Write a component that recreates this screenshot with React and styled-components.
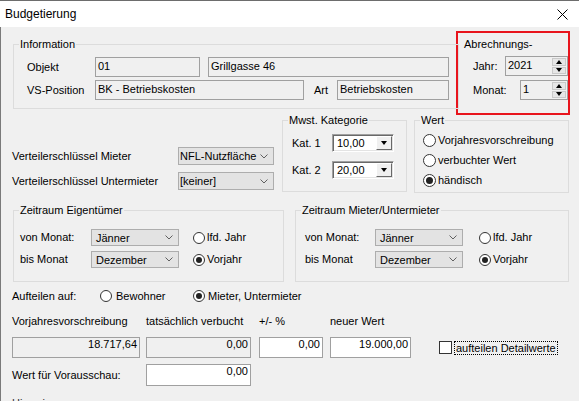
import React from 'react';
import styled, { createGlobalStyle } from 'styled-components';

const GlobalStyle = createGlobalStyle`
  html, body { margin: 0; padding: 0; }
  body { width: 579px; height: 401px; overflow: hidden; background: #f0f0f0; }
  * { box-sizing: border-box; }
`;

const Window = styled.div`
  width: 579px;
  height: 401px;
  display: flex;
  flex-direction: column;
  overflow: hidden;
  border-top: 1px solid #6d6d6d;
  font-family: "Liberation Sans", Arial, sans-serif;
  font-size: 11px;
  color: #000;
  background: #f0f0f0;
`;

const TitleBar = styled.header`
  flex: none;
  height: 26px;
  background: #fff;
  display: flex;
  align-items: center;
  justify-content: space-between;
  padding: 0 11px 0 5px;
  font-size: 12px;
`;

const Body = styled.main`
  flex: 1;
  border-left: 1px solid #7a7a7a;
  padding: 4px 0 0 11px;
  display: flex;
  flex-direction: column;
`;

const Row = styled.div`
  display: flex;
  align-items: ${p => p.$align || 'flex-start'};
  margin-top: ${p => p.$mt || 0}px;
  height: ${p => (p.$h ? p.$h + 'px' : 'auto')};
`;

const GroupBox = styled.section`
  position: relative;
  flex: none;
  width: ${p => p.$w}px;
  height: ${p => p.$h}px;
  margin: ${p => p.$mt || 0}px 0 0 ${p => p.$ml || 0}px;
  border: 1px solid #dcdcdc;
  padding: ${p => p.$pad || '0'};
  display: flex;
  flex-direction: column;
  gap: ${p => p.$gap || 0}px;
`;

const Caption = styled.span`
  position: absolute;
  top: -7px;
  left: 5px;
  padding: 0 1px;
  background: #f0f0f0;
  line-height: 13px;
  white-space: nowrap;
`;

const HighlightBox = styled.section`
  flex: none;
  width: 114px;
  height: 84px;
  margin-left: -3px;
  border: 2px solid #e8141c;
  padding: 5px 0 0 6px;
  display: flex;
  flex-direction: column;
`;

const PlainCaption = styled.span`
  line-height: 13px;
`;

const FieldRow = styled.div`
  display: flex;
  align-items: center;
  height: ${p => p.$h || 20}px;
  margin-top: ${p => p.$mt || 0}px;
  padding-left: ${p => p.$pl || 0}px;
`;

const Label = styled.span`
  flex: none;
  width: ${p => (p.$w ? p.$w + 'px' : 'auto')};
  margin-left: ${p => p.$ml || 0}px;
  line-height: 13px;
  white-space: nowrap;
`;

const TextBox = styled.div`
  flex: none;
  width: ${p => p.$w}px;
  height: ${p => p.$h || 20}px;
  margin-left: ${p => p.$ml || 0}px;
  border: 1px solid #a0a0a0;
  background: ${p => (p.$ro ? '#f0f0f0' : '#fff')};
  padding: ${p => p.$pt ?? 2}px 2px 0 2px;
  line-height: 13px;
  text-align: ${p => (p.$right ? 'right' : 'left')};
  white-space: nowrap;
  overflow: hidden;
`;

const Combo = styled.div`
  flex: none;
  width: ${p => p.$w}px;
  height: ${p => p.$h || 18}px;
  margin-left: ${p => p.$ml || 0}px;
  display: flex;
  align-items: center;
  justify-content: space-between;
  padding: 0 5px 0 ${p => p.$pl ?? 3}px;
  background: #e3e3e3;
  border: 1px solid #adadad;
  white-space: nowrap;
`;

const Chevron = () => (
  <svg width="8" height="5" viewBox="0 0 8 5">
    <polyline points="0.5,0.5 4,4 7.5,0.5" fill="none" stroke="#606060" strokeWidth="1" />
  </svg>
);

const OldCombo = styled.div`
  flex: none;
  width: 62px;
  height: 18px;
  display: flex;
  background: #fff;
  border-top: 1px solid #a0a0a0;
  border-left: 1px solid #a0a0a0;
  border-right: 1px solid #fff;
  border-bottom: 1px solid #fff;
  box-shadow: inset 1px 1px 0 #696969, inset -1px -1px 0 #e3e3e3;
  padding: 1px;
`;

const OldComboText = styled.span`
  flex: 1;
  padding-left: 3px;
  line-height: 15px;
`;

const DropButton = styled.span`
  flex: none;
  width: 16px;
  background: #f0f0f0;
  border: 1px solid;
  border-color: #fff #696969 #696969 #fff;
  display: flex;
  align-items: center;
  justify-content: center;
`;

const Triangle = styled.span`
  width: 0;
  height: 0;
  border-left: 3.5px solid transparent;
  border-right: 3.5px solid transparent;
  ${p => (p.$up ? 'border-bottom' : 'border-top')}: 4px solid #000;
`;

const SpinBox = styled.div`
  flex: none;
  width: ${p => p.$w}px;
  height: 20px;
  margin-left: auto;
  display: flex;
  border: 1px solid #a0a0a0;
  background: #f0f0f0;
`;

const SpinText = styled.span`
  flex: 1;
  padding: 2px 2px 0 2px;
  line-height: 13px;
`;

const SpinButtons = styled.span`
  flex: none;
  width: 16px;
  display: flex;
  flex-direction: column;
  gap: 1px;
  padding: 1px;
`;

const SpinButton = styled.span`
  flex: 1;
  background: #e6e6e6;
  border: 1px solid #c9c9c9;
  display: flex;
  align-items: center;
  justify-content: center;
`;

const Choice = styled.label`
  flex: none;
  display: flex;
  align-items: center;
  gap: ${p => p.$gap ?? 2}px;
  width: ${p => (p.$w ? p.$w + 'px' : 'auto')};
  height: ${p => p.$h || 14}px;
  margin-left: ${p => p.$ml || 0}px;
  line-height: 13px;
  white-space: nowrap;
`;

const Radio = styled.span`
  flex: none;
  width: ${p => p.$size || 13}px;
  height: ${p => p.$size || 13}px;
  border-radius: 50%;
  border: 1px solid #333;
  background: #fff;
  display: flex;
  align-items: center;
  justify-content: center;
  &::after {
    content: '';
    width: ${p => (p.$checked ? (p.$size || 13) - 6 : 0)}px;
    height: ${p => (p.$checked ? (p.$size || 13) - 6 : 0)}px;
    border-radius: 50%;
    background: #222;
  }
`;

const CheckBox = styled.span`
  flex: none;
  width: 13px;
  height: 13px;
  border: 1px solid #333;
  background: #fff;
`;

const FocusText = styled.span`
  border: 1px dotted #000;
  padding: 0 1px;
  line-height: 12px;
`;

const LeftColumn = styled.div`
  flex: none;
  width: 270px;
  padding-top: 27px;
  display: flex;
  flex-direction: column;
  gap: 7px;
`;

const AmountGrid = styled.div`
  display: grid;
  grid-template-columns: 134px 113px 71px 109px auto;
  align-items: center;
  margin-top: ${p => p.$mt || 0}px;
  line-height: 14px;
`;

const FootNote = styled.div`
  margin-top: 11px;
  line-height: 13px;
  color: #333;
`;

const CloseIcon = () => (
  <svg width="11" height="11" viewBox="0 0 11 11">
    <path d="M0.5 0.5 L10.5 10.5 M10.5 0.5 L0.5 10.5" stroke="#000" strokeWidth="1" />
  </svg>
);

const Period = ({ title, w, ml, pad, labelW, radioMl }) => (
  <GroupBox $w={w} $h={72} $ml={ml} $pad={pad} $gap={5}>
    <Caption>{title}</Caption>
    <FieldRow $h={17}>
      <Label $w={labelW}>von Monat:</Label>
      <Combo $w={88} $h={17} $pl={4}>Jänner<Chevron /></Combo>
      <Choice $ml={radioMl}><Radio $size={12} />lfd. Jahr</Choice>
    </FieldRow>
    <FieldRow $h={17}>
      <Label $w={labelW}>bis Monat</Label>
      <Combo $w={88} $h={17} $pl={4}>Dezember<Chevron /></Combo>
      <Choice $ml={radioMl}><Radio $size={12} $checked />Vorjahr</Choice>
    </FieldRow>
  </GroupBox>
);

export default function App() {
  return (
    <>
      <GlobalStyle />
      <Window>
        <TitleBar>
          <span>Budgetierung</span>
          <CloseIcon />
        </TitleBar>
        <Body>
          <Row>
            <GroupBox $w={446} $h={65} $mt={13} $ml={1} $pad="12px 0 0 13px" $gap={3}>
              <Caption>Information</Caption>
              <FieldRow>
                <Label $w={68}>Objekt</Label>
                <TextBox $w={105} $ro>01</TextBox>
                <TextBox $w={241} $ml={8} $ro>Grillgasse 46</TextBox>
              </FieldRow>
              <FieldRow>
                <Label $w={68}>VS-Position</Label>
                <TextBox $w={209} $ro>BK - Betriebskosten</TextBox>
                <Label $w={23} $ml={10}>Art</Label>
                <TextBox $w={112} $ro>Betriebskosten</TextBox>
              </FieldRow>
            </GroupBox>
            <HighlightBox>
              <PlainCaption>Abrechnungs-</PlainCaption>
              <FieldRow $mt={5} $pl={9}>
                <Label>Jahr:</Label>
                <SpinBox $w={63}>
                  <SpinText>2021</SpinText>
                  <SpinButtons>
                    <SpinButton><Triangle $up /></SpinButton>
                    <SpinButton><Triangle /></SpinButton>
                  </SpinButtons>
                </SpinBox>
              </FieldRow>
              <FieldRow $mt={4} $pl={9}>
                <Label>Monat:</Label>
                <SpinBox $w={48}>
                  <SpinText>1</SpinText>
                  <SpinButtons>
                    <SpinButton><Triangle $up /></SpinButton>
                    <SpinButton><Triangle /></SpinButton>
                  </SpinButtons>
                </SpinBox>
              </FieldRow>
            </HighlightBox>
          </Row>

          <Row $mt={5}>
            <LeftColumn>
              <FieldRow $h={18}>
                <Label $w={166}>Verteilerschlüssel Mieter</Label>
                <Combo $w={96} $pl={1}>NFL-Nutzfläche<Chevron /></Combo>
              </FieldRow>
              <FieldRow $h={18}>
                <Label $w={166}>Verteilerschlüssel Untermieter</Label>
                <Combo $w={96} $pl={1}>[keiner]<Chevron /></Combo>
              </FieldRow>
            </LeftColumn>
            <GroupBox $w={125} $h={72} $pad="13px 0 0 9px" $gap={9}>
              <Caption>Mwst. Kategorie</Caption>
              <FieldRow $h={18}>
                <Label $w={40}>Kat. 1</Label>
                <OldCombo>
                  <OldComboText>10,00</OldComboText>
                  <DropButton><Triangle /></DropButton>
                </OldCombo>
              </FieldRow>
              <FieldRow $h={18}>
                <Label $w={40}>Kat. 2</Label>
                <OldCombo>
                  <OldComboText>20,00</OldComboText>
                  <DropButton><Triangle /></DropButton>
                </OldCombo>
              </FieldRow>
            </GroupBox>
            <GroupBox $w={155} $h={73} $ml={7} $pad="9px 0 0 8px">
              <Caption>Wert</Caption>
              <Choice $h={20}><Radio />Vorjahresvorschreibung</Choice>
              <Choice $h={20}><Radio />verbuchter Wert</Choice>
              <Choice $h={20}><Radio $checked />händisch</Choice>
            </GroupBox>
          </Row>

          <Row $mt={17}>
            <Period title="Zeitraum Eigentümer" w={271} ml={1} pad="18px 0 0 6px" labelW={71} radioMl={14} />
            <Period title="Zeitraum Mieter/Untermieter" w={274} ml={11} pad="18px 0 0 9px" labelW={70} radioMl={16} />
          </Row>

          <Row $mt={7} $h={14} $align="center">
            <Label $w={88}>Aufteilen auf:</Label>
            <Choice $w={93} $gap={4}><Radio $size={12} />Bewohner</Choice>
            <Choice $gap={3}><Radio $size={12} $checked />Mieter, Untermieter</Choice>
          </Row>

          <AmountGrid $mt={11}>
            <span>Vorjahresvorschreibung</span>
            <span>tatsächlich verbucht</span>
            <span>+/- %</span>
            <span>neuer Wert</span>
            <span />
          </AmountGrid>
          <AmountGrid $mt={9}>
            <TextBox $w={128} $h={21} $pt={0} $ro $right>18.717,64</TextBox>
            <TextBox $w={105} $h={21} $pt={0} $ro $right>0,00</TextBox>
            <TextBox $w={64} $h={21} $pt={0} $right>0,00</TextBox>
            <TextBox $w={81} $h={21} $pt={0} $right>19.000,00</TextBox>
            <Choice $gap={2}><CheckBox /><FocusText>aufteilen Detailwerte</FocusText></Choice>
          </AmountGrid>

          <Row $mt={6} $align="center">
            <Label $w={134}>Wert für Vorausschau:</Label>
            <TextBox $w={105} $h={22} $pt={0} $right>0,00</TextBox>
          </Row>
          <FootNote>Hinweis</FootNote>
        </Body>
      </Window>
    </>
  );
}
